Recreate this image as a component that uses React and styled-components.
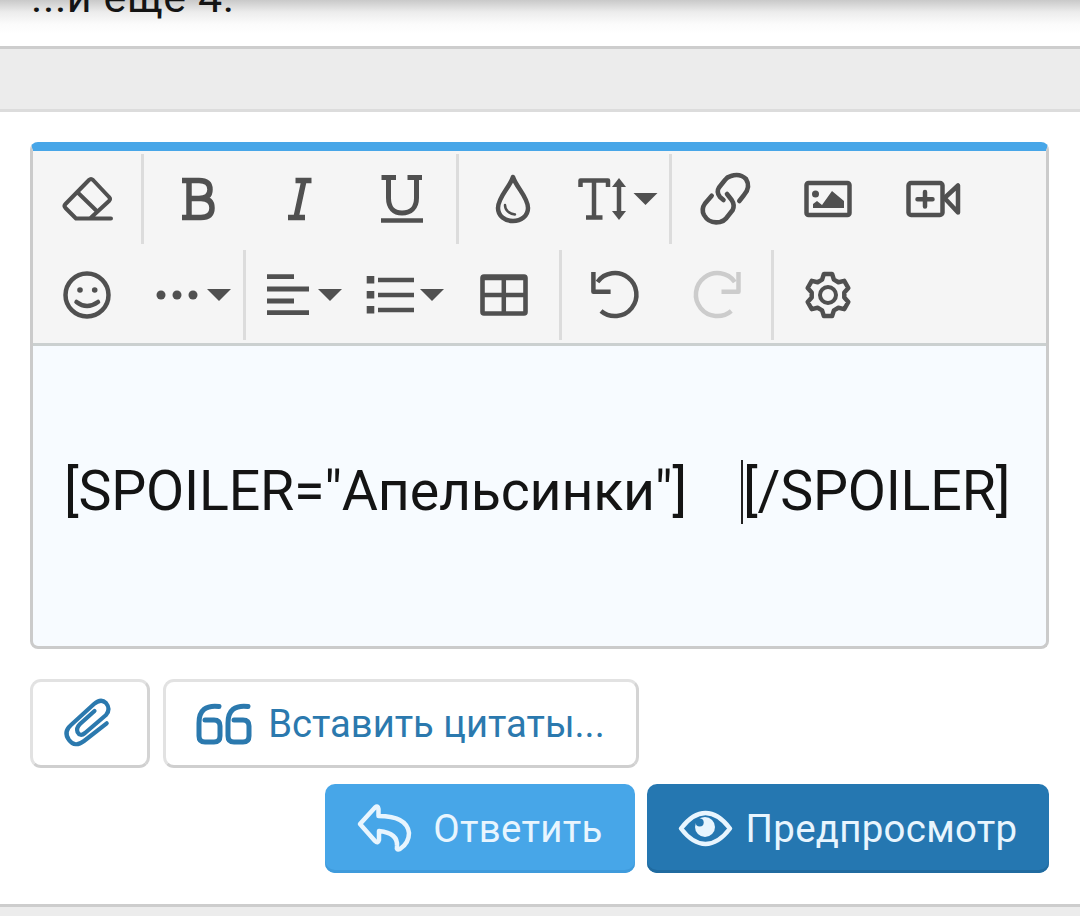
import React from "react";
import styled, { createGlobalStyle } from "styled-components";

const Global = createGlobalStyle`
  html, body { margin: 0; padding: 0; background: #fff; }
  body { font-family: Roboto, "Liberation Sans", sans-serif; overflow: hidden; }
`;
const Page = styled.div`width:1080px;height:916px;overflow:hidden;display:flex;flex-direction:column;background:#fff;`;
const TopNote = styled.div`
  height:46px;overflow:hidden;padding-left:31px;box-sizing:border-box;flex:none;
  background:linear-gradient(#c9c9c9 0,#ececec 12px,#fbfbfb 24px,#fff 34px);
  color:#141414;font-size:43px;line-height:46px;letter-spacing:.6px;
  & > span{display:block;margin-top:-26px;}
`;
const Band = styled.div`height:60px;background:#ececec;border-top:3px solid #cdcdcd;border-bottom:3px solid #dcdcdc;flex:none;`;
const Main = styled.div`padding:30px 31px 0 30px;flex:1;display:flex;flex-direction:column;`;
const Editor = styled.div`
  height:507px;box-sizing:border-box;border:3px solid #cbcbcb;border-top:9px solid #47a6e8;border-radius:8px;
  overflow:hidden;display:flex;flex-direction:column;background:#f7fbff;
`;
const Toolbar = styled.div`
  background:#f5f5f5;border-bottom:3px solid #cbd0d0;padding:3px 0 3px 3px;display:flex;flex-direction:column;gap:6px;flex:none;
`;
const ToolRow = styled.div`display:flex;height:90px;`;
const Sep = styled.div`width:3px;background:#dcdcdc;flex:none;`;
const GlyphSvg = styled.svg`
  display:block;flex:none;overflow:visible;
  fill:none;stroke:${p=>p.$off?"#cccccc":"#505050"};stroke-width:4.5;stroke-linecap:round;stroke-linejoin:round;
  .s{fill:#505050;stroke:none;}
`;
const Tool = ({x,w,y,off,children}) => (
  <GlyphSvg $off={off} width={w} height={90} viewBox={`${x} ${y} ${w} 90`}>{children}</GlyphSvg>
);
const Content = styled.div`
  flex:1;display:flex;align-items:center;padding-left:31px;padding-bottom:8px;white-space:pre;
  font-size:55.5px;color:#141414;line-height:64px;letter-spacing:-.2px;
`;
const Caret = styled.span`display:inline-block;width:2px;height:64px;background:#222;margin:0 0 0 54px;flex:none;`;
const Row = styled.div`display:flex;gap:13px;margin-top:30px;`;
const GhostBtn = styled.div`
  height:89px;box-sizing:border-box;width:${p=>p.$w}px;border:3px solid #e2e2e2;border-right-color:#d4d4d4;border-bottom-color:#cfcfcf;border-radius:11px;
  padding-right:${p=>p.$inset || 0}px;
  display:flex;align-items:center;justify-content:center;gap:17px;color:#2b79ae;font-size:38.2px;background:#fff;
`;
const ActionRow = styled.div`display:flex;justify-content:flex-end;gap:12px;margin-top:16px;`;
const ActionBtn = styled.div`
  height:89px;box-sizing:border-box;width:${p=>p.$w}px;border-radius:10px;background:${p=>p.$bg};box-shadow:inset 0 -3px 0 ${p=>p.$edge};
  display:flex;align-items:center;justify-content:center;gap:${p=>p.$gap}px;color:#e8f5fe;font-size:38.4px;letter-spacing:.3px;
`;
const LineIcon = styled.svg`display:block;flex:none;fill:none;stroke:${p=>p.$c};stroke-width:${p=>p.$sw || 4.5};stroke-linecap:round;stroke-linejoin:round;overflow:visible;`;
const Bottom = styled.div`height:9px;background:#ececec;border-top:3px solid #cdcdcd;flex:none;`;

const Caretdown = ({a,y=289}) => <polygon className="s" points={`${a},${y} ${a+24},${y} ${a+12},${y+12}`}/>;

const gearPoints = (cx, cy) => {
  const pts = [];
  const pol = (r, deg) => `${(cx + r * Math.cos(deg * Math.PI / 180)).toFixed(2)},${(cy + r * Math.sin(deg * Math.PI / 180)).toFixed(2)}`;
  for (let i = 0; i < 6; i++) {
    const a = -90 + i * 60;
    pts.push(pol(16.5, a - 21), pol(21.5, a - 11), pol(21.5, a + 11), pol(16.5, a + 21));
  }
  return pts.join(" ");
};

export default function App(){
  return (
    <Page>
      <Global/>
      <TopNote><span>...и еще 4.</span></TopNote>
      <Band/>
      <Main>
        <Editor>
          <Toolbar>
            <ToolRow>
              <Tool x={36} w={105} y={154}>
                <path strokeWidth="4" d="M111 218.5H76L65.5 208Q63.5 206 65.5 204L89 180Q91 178 93 180L109 197Q111 199 109 201L90 218.5M77.5 192.3L95.7 210"/>
              </Tool>
              <Sep/>
              <Tool x={144} w={103} y={154}>
                <path strokeWidth="5.5" strokeLinecap="butt" d="M182 180.5H199Q210 180.5 210 189.5Q210 198.5 199 198.5H189M189 180.5V217.5M182 217.5H201Q212 217.5 212 208Q212 198.5 201 198.5"/>
              </Tool>
              <Tool x={247} w={102} y={154}>
                <path strokeWidth="5.5" strokeLinecap="butt" d="M295.5 180.5H311.5M288 217.5H305M304 180.5L296 217.5"/>
              </Tool>
              <Tool x={349} w={107} y={154}>
                <path strokeWidth="5" strokeLinecap="butt" d="M381.5 177.5H396M407.5 177.5H422M388.5 177.5V198C388.5 208 394 213 402 213C410.5 213 416.5 208 416.5 198V177.5"/>
                <path strokeLinecap="butt" d="M381 220.5H423"/>
              </Tool>
              <Sep/>
              <Tool x={459} w={103} y={154}>
                <path d="M513 177C510 187 498 197 498 208C498 216 505 221 513 221C521 221 528 216 528 208C528 197 516 187 513 177Z"/>
                <path strokeWidth="2.5" d="M505 205C505 210 509 214 515 214.5"/>
              </Tool>
              <Tool x={562} w={107} y={154}>
                <path strokeLinecap="butt" d="M580.5 187V180.5H608V187M594 180.5V217.5M586 217.5H602.5"/>
                <path strokeLinecap="butt" d="M619 182V216"/>
                <polygon className="s" points="619,178 626,187 612,187"/>
                <polygon className="s" points="619,220 626,211 612,211"/>
                <Caretdown a={633.5} y={193}/>
              </Tool>
              <Sep/>
              <Tool x={672} w={106} y={154}>
                <path strokeWidth="4.6" d="M739.3 201L744 195Q751 187 746 179Q740 173 731 176Q727 177 725 180L719 187.5Q716 192 720 197L723.5 200"/>
                <path strokeWidth="4.6" d="M711.7 195.7L705 203.5Q701 209 704 215Q709 224 720 222Q724 221 726 218.5L732.7 210Q735 205 731.7 200L727 194"/>
              </Tool>
              <Tool x={778} w={102} y={154}>
                <rect x="806.5" y="183" width="43" height="32" rx="2"/>
                <circle className="s" cx="815.5" cy="194" r="3.5"/>
                <polygon className="s" points="813,208 813,204 817,201 822,205 832,191 844,201 844,208"/>
              </Tool>
              <Tool x={880} w={105} y={154}>
                <rect x="908.5" y="183" width="34" height="32" rx="2.5"/>
                <path d="M925 192V206.5M917.5 199.2H932.5M944.5 198L958 185.5V212.5Z"/>
              </Tool>
            </ToolRow>
            <ToolRow>
              <Tool x={36} w={103} y={250}>
                <circle cx="87" cy="295" r="21.5"/>
                <circle className="s" cx="80" cy="290" r="2.8"/>
                <circle className="s" cx="94.7" cy="290" r="2.8"/>
                <path d="M76.5 302Q87 310 98 302"/>
              </Tool>
              <Tool x={139} w={104} y={250}>
                <circle className="s" cx="161" cy="295" r="4.5"/>
                <circle className="s" cx="177" cy="295" r="4.5"/>
                <circle className="s" cx="193" cy="295" r="4.5"/>
                <Caretdown a={207}/>
              </Tool>
              <Sep/>
              <Tool x={246} w={104} y={250}>
                <path strokeWidth="4.8" strokeLinecap="butt" d="M267 276.7H294M267 289H309M267 301H294M267 312.7H309"/>
                <Caretdown a={318}/>
              </Tool>
              <Tool x={350} w={105} y={250}>
                <rect className="s" x="366.7" y="276" width="7.6" height="7.5"/>
                <rect className="s" x="366.7" y="291" width="7.6" height="7.5"/>
                <rect className="s" x="366.7" y="306" width="7.6" height="7.5"/>
                <path strokeWidth="4.6" strokeLinecap="butt" d="M378 280H414M378 295H414M378 310H414"/>
                <Caretdown a={420}/>
              </Tool>
              <Tool x={455} w={104} y={250}>
                <rect x="482.5" y="276.5" width="43" height="37" rx="1.5" strokeWidth="4.6"/>
                <path strokeLinecap="butt" d="M503.8 276V314M482 295H526"/>
                <path strokeLinecap="butt" d="M482 278H526"/>
              </Tool>
              <Sep/>
              <Tool x={562} w={103} y={250}>
                <path strokeLinecap="butt" d="M597.5 282A21.5 21.5 0 1 1 601 311"/>
                <path strokeLinecap="butt" d="M593.4 272V291.7H610.6"/>
              </Tool>
              <Tool x={665} w={106} y={250} off>
                <path strokeLinecap="butt" d="M734.8 282A21.5 21.5 0 1 0 731.3 311"/>
                <path strokeLinecap="butt" d="M738.5 272V291.7H721.5"/>
              </Tool>
              <Sep/>
              <Tool x={774} w={106} y={250}>
                <polygon points={gearPoints(828,295)}/>
                <circle cx="828" cy="295" r="8" strokeWidth="4"/>
              </Tool>
            </ToolRow>
          </Toolbar>
          <Content>
            <span>[SPOILER="Апельсинки"]</span><Caret/><span>[/SPOILER]</span>
          </Content>
        </Editor>
        <Row>
          <GhostBtn $w={120} $inset={7}>
            <LineIcon $c="#2b79ae" $sw={4.2} width="46" height="50" viewBox="63 700 46 50">
              <path d="M105.7 724.3L83 742Q74 749 68 741Q62 733 70 726L93 705Q100 699 105 704Q110 710 105 716L84 734Q79 738 76.5 733Q75 729 79 725L93.5 712"/>
            </LineIcon>
          </GhostBtn>
          <GhostBtn $w={476}>
            <LineIcon $c="#2b79ae" $sw={5} width="54" height="42" viewBox="196 704 54 42">
              <path d="M218 707.5C205 706 198 711 198 724V737Q198 743 204 743H213Q219 743 219 737V727Q219 721 213 721H204"/>
              <path d="M247 707.5C234 706 227 711 227 724V737Q227 743 233 743H242Q248 743 248 737V727Q248 721 242 721H233"/>
            </LineIcon>
            <span>Вставить цитаты...</span>
          </GhostBtn>
        </Row>
        <ActionRow>
          <ActionBtn $w={310} $bg="#47a6e8" $edge="#3f9bdc" $gap={22}>
            <LineIcon $c="#e8f5fe" width="54" height="48" viewBox="358 806 54 48">
              <path d="M361 825L376 808.5Q379 806 379.5 810V817Q408 817 410 834Q410 844 401 850Q397 852 398 847Q399 834 380 832V841Q379 845 376 842Z"/>
            </LineIcon>
            <span>Ответить</span>
          </ActionBtn>
          <ActionBtn $w={402} $bg="#2577b1" $edge="#206ba0" $gap={13}>
            <LineIcon $c="#e8f5fe" width="54" height="36" viewBox="680 812 54 36">
              <path d="M682 829.5C690 819 698 814 706.5 814C715 814 723 819 731 829.5C723 840 715 845 706.5 845C698 845 690 840 682 829.5Z"/>
              <circle cx="706" cy="828" r="10" fill="#e8f5fe" stroke="none"/>
              <circle cx="700.7" cy="823.5" r="4" fill="#2577b1" stroke="none"/>
            </LineIcon>
            <span>Предпросмотр</span>
          </ActionBtn>
        </ActionRow>
      </Main>
      <Bottom/>
    </Page>
  );
}
